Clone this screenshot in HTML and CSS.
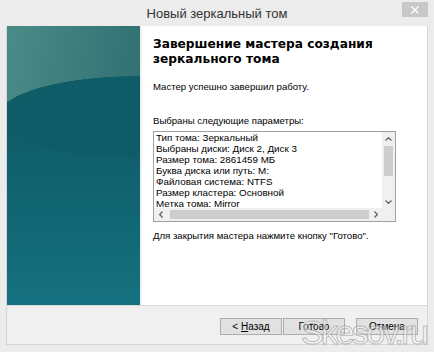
FILE: index.html
```html
<!DOCTYPE html>
<html lang="ru">
<head>
<meta charset="utf-8">
<title>Новый зеркальный том</title>
<link rel="stylesheet" href="styles.css">
</head>
<body>
<div class="window">
  <div class="titlebar">
    <div class="title">Новый зеркальный том</div>
    <div class="close">
      <svg width="8" height="8" viewBox="0 0 8 8"><path d="M0.5 0.5 L7.5 7.5 M7.5 0.5 L0.5 7.5" stroke="#fff" stroke-width="1.4"/></svg>
    </div>
  </div>
  <div class="client">
    <div class="main">
      <div class="banner"></div>
      <div class="content">
        <h1 class="heading">Завершение мастера создания зеркального тома</h1>
        <p class="text ok">Мастер успешно завершил работу.</p>
        <p class="text label">Выбраны следующие параметры:</p>
        <div class="listbox">
          <div class="lines">
            <div>Тип тома: Зеркальный</div>
            <div>Выбраны диски: Диск 2, Диск 3</div>
            <div>Размер тома: 2861459 МБ</div>
            <div>Буква диска или путь: M:</div>
            <div>Файловая система: NTFS</div>
            <div>Размер кластера: Основной</div>
            <div>Метка тома: Mirror</div>
          </div>
          <div class="vscroll">
            <div class="arrow"><svg width="7" height="4" viewBox="0 0 7 4"><path d="M0.5 3.5 L3.5 0.7 L6.5 3.5" fill="none" stroke="#606060" stroke-width="1.2"/></svg></div>
            <div class="vtrack"><div class="vthumb"></div></div>
            <div class="arrow"><svg width="7" height="4" viewBox="0 0 7 4"><path d="M0.5 0.5 L3.5 3.3 L6.5 0.5" fill="none" stroke="#606060" stroke-width="1.2"/></svg></div>
          </div>
          <div class="hscroll">
            <div class="arrow"><svg width="4" height="7" viewBox="0 0 4 7"><path d="M3.5 0.5 L0.7 3.5 L3.5 6.5" fill="none" stroke="#606060" stroke-width="1.2"/></svg></div>
            <div class="htrack"><div class="hthumb"></div></div>
            <div class="arrow"><svg width="4" height="7" viewBox="0 0 4 7"><path d="M0.5 0.5 L3.3 3.5 L0.5 6.5" fill="none" stroke="#606060" stroke-width="1.2"/></svg></div>
          </div>
          <div class="corner"></div>
        </div>
        <p class="text finish">Для закрытия мастера нажмите кнопку "Готово".</p>
      </div>
    </div>
    <div class="buttons">
      <button class="btn">&lt; <u>Н</u>азад</button>
      <button class="btn">Готово</button>
      <button class="btn cancel">Отмена</button>
    </div>
  </div>
  <div class="watermark">Skesov.ru</div>
</div>
</body>
</html>
```
FILE: styles.css
```css
* { box-sizing: border-box; }
html, body { margin: 0; padding: 0; }
body {
  background: #ececec;
  font-family: "Liberation Sans", Arial, sans-serif;
  color: #000;
}
.window {
  position: relative;
  width: 434px;
  height: 352px;
  background: #ececec;
  overflow: hidden;
}
.titlebar {
  position: relative;
  height: 26px;
  display: flex;
  justify-content: center;
  align-items: center;
}
.title {
  font-family: "Liberation Sans", Arial, sans-serif;
  font-size: 13px;
  color: #333;
  margin-top: 1px;
}
.close {
  position: absolute;
  right: 6px;
  top: 2px;
  width: 26px;
  height: 15px;
  background: #c8c8c8;
  display: flex;
  justify-content: center;
  align-items: center;
}
.client {
  margin-left: 6px;
  width: 422px;
  border-left: 1px solid #d6d6d6;
  border-right: 1px solid #d6d6d6;
  border-bottom: 1px solid #d6d6d6;
}
.main {
  display: flex;
  height: 279px;
  gap: 2px;
  background: #f0f0f0;
}
.banner {
  width: 133px;
  flex: none;
  background:
    radial-gradient(140px 41px at 130px 91px, #0e5c67 99%, transparent 100%),
    linear-gradient(to bottom, transparent 91px, #0e5c67 91px, #116572 180px, #157180 279px),
    linear-gradient(100deg, #4b8b87 0%, #3b7a7a 50%, #2a676d 100%);
}
.content {
  flex: 1;
  background: #fff;
  padding: 11px 8px 0 11px;
}
.heading {
  margin: 0;
  font-family: "DejaVu Sans", Verdana, sans-serif;
  font-weight: bold;
  font-size: 12.2px;
  line-height: 15px;
  color: #000;
}
.text {
  margin: 0;
  font-size: 9.6px;
  line-height: 12px;
  color: #000;
}
.ok { margin-top: 14px; }
.label { margin-top: 22px; }
.listbox {
  margin-top: 4px;
  width: 243px;
  height: 91px;
  border: 1px solid #a0a0a0;
  display: grid;
  grid-template-columns: 1fr 13px;
  grid-template-rows: 1fr 13px;
  background: #fff;
}
.lines {
  overflow: hidden;
  padding: 0 0 0 2px;
  font-size: 9.8px;
  line-height: 11px;
  white-space: nowrap;
}
.vscroll {
  display: flex;
  flex-direction: column;
  background: #f0f0f0;
}
.vscroll .arrow {
  height: 13px;
  display: flex;
  justify-content: center;
  align-items: center;
}
.vtrack { flex: 1; }
.vthumb {
  width: 9px;
  margin: 1px auto 0;
  height: 30px;
  background: #cdcdcd;
}
.hscroll {
  display: flex;
  background: #f0f0f0;
}
.hscroll .arrow {
  width: 13px;
  display: flex;
  justify-content: center;
  align-items: center;
}
.htrack { flex: 1; display: flex; align-items: center; }
.hthumb {
  height: 9px;
  margin-left: 3px;
  flex: 1;
  background: #cdcdcd;
}
.corner { background: #f0f0f0; }
.finish { margin-top: 8px; }
.buttons {
  height: 39px;
  border-top: 1px solid #dadada;
  background: #f0f0f0;
  display: flex;
  justify-content: flex-end;
  align-items: flex-start;
  padding: 12px 9px 0 0;
  gap: 1px;
}
.btn {
  width: 62px;
  height: 17px;
  padding: 0;
  border: 1px solid #adadad;
  background: #e1e1e1;
  font-family: "Liberation Sans", Arial, sans-serif;
  font-size: 10px;
  color: #000;
}
.btn u { text-decoration: underline; }
.cancel { margin-left: 10px; }
.watermark {
  position: absolute;
  left: 301px;
  top: 313px;
  font-family: "Liberation Sans", Arial, sans-serif;
  font-size: 34px;
  letter-spacing: -2.6px;
  color: rgba(255, 255, 255, 0.45);
  -webkit-text-stroke: 1px rgba(140, 140, 140, 0.55);
  pointer-events: none;
}
```
